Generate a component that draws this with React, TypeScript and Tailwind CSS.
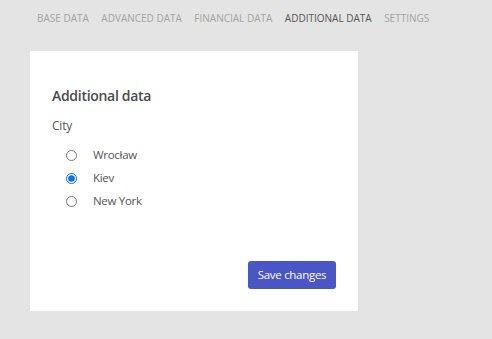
import React from 'react'

const tabs = ['Base data', 'Advanced data', 'Financial data', 'Additional data', 'Settings']
const cities = ['Wrocław', 'Kiev', 'New York']

const App = () => {
  const [city, setCity] = React.useState('Kiev')

  return (
    <div className="w-[492px] h-[339px] bg-[#e4e4e4] font-['Open_Sans',sans-serif]">
      {/* Tabs */}
      <div className="flex flex-row gap-[12.5px] pl-[37px] pt-[11px] h-[51px]">
        {tabs.map(tab => (
          <span
            key={tab}
            className={`text-[10px] uppercase leading-[14px] ${tab === 'Additional data' ? 'text-[#555]' : 'text-[#a3a3a3]'}`}
          >
            {tab}
          </span>
        ))}
      </div>

      {/* Card */}
      <div className="ml-[30px] w-[328px] h-[260px] bg-white flex flex-col px-[22px] pt-[35px] pb-[22px]">
        <h2 className="text-[14px] font-semibold tracking-[-0.3px] text-[#4a4a4a] leading-[20px]">Additional data</h2>
        <div className="text-[12px] tracking-[-0.2px] text-[#555] mt-[12px] leading-[16px]">City</div>
        <div className="flex flex-col gap-[7px] mt-[13px] pl-[14px]">
          {cities.map(c => (
            <label key={c} className="flex flex-row items-center h-[16px] cursor-pointer">
              <input
                type="radio"
                name="city"
                checked={city === c}
                onChange={() => setCity(c)}
                className="w-[11px] h-[11px] m-0 accent-[#0b73f0]"
              />
              <span className="ml-[16px] text-[11.5px] tracking-[-0.3px] text-[#555]">{c}</span>
            </label>
          ))}
        </div>
        <div className="flex flex-row justify-end mt-auto">
          <button className="w-[88px] h-[28px] bg-[#4a55c7] text-white text-[11.5px] tracking-[-0.3px] rounded-[3px] font-medium">
            Save changes
          </button>
        </div>
      </div>
    </div>
  )
}

export default App
